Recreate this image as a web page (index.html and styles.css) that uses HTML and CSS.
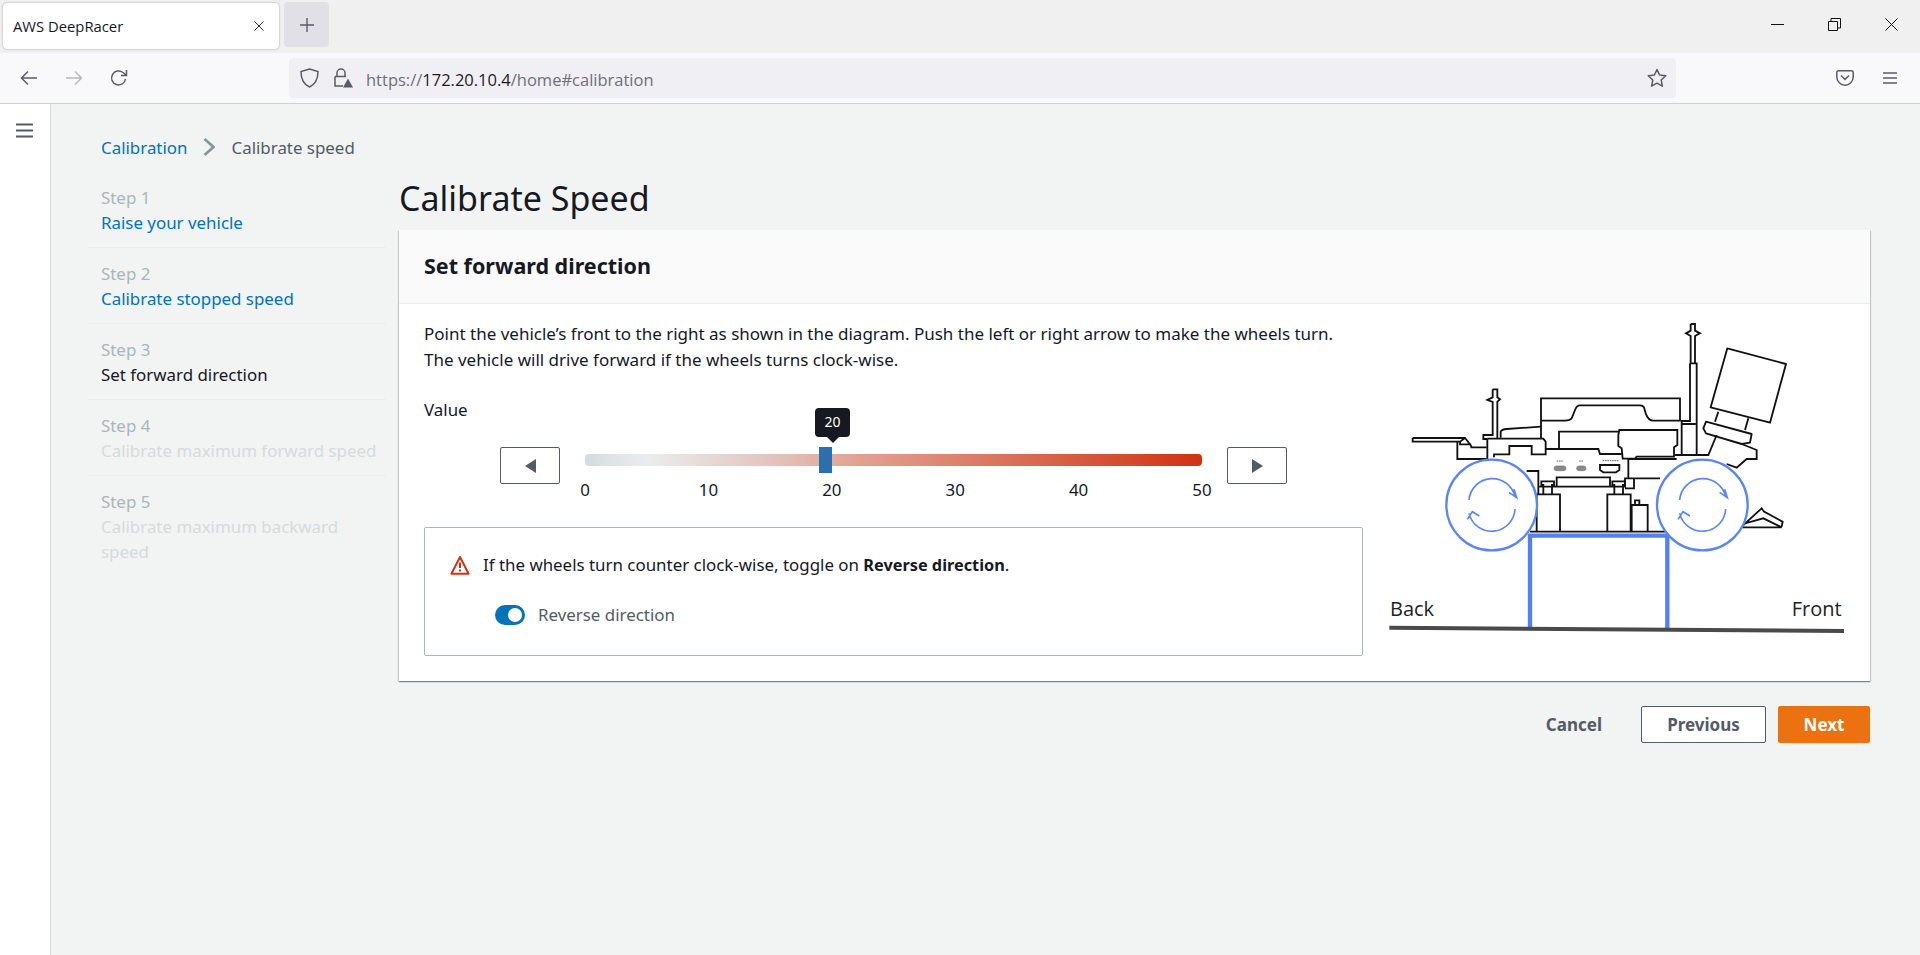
FILE: index.html
```html
<!DOCTYPE html>
<html lang="en">
<head>
    <meta charset="UTF-8">
    <meta name="viewport" content="width=device-width, initial-scale=1.0">
    <title>AWS DeepRacer</title>
    <link rel="stylesheet" href="styles.css">
</head>
<body>

    <!-- browser chrome -->
    <div class="tab-strip">
        <div class="tab">
            <span class="tab-title">AWS DeepRacer</span>
            <svg class="icon-sm" width="10" height="10" viewBox="0 0 10 10"><path d="M0.5 0.5L9.5 9.5M9.5 0.5L0.5 9.5" stroke="#2b2a33" fill="none"/></svg>
        </div>
        <div class="new-tab">
            <svg width="16" height="16" viewBox="0 0 16 16"><path d="M8 1V15M1 8H15" stroke="#5b5b66" stroke-width="1.4" fill="none"/></svg>
        </div>
        <div class="window-controls">
            <svg width="13" height="13" viewBox="0 0 13 13"><path d="M0 6.5H13" stroke="#111" fill="none"/></svg>
            <svg width="13" height="13" viewBox="0 0 13 13"><path d="M0.5 3.5H9.5V12.5H0.5ZM3 3.5V0.5H12.5V10H9.5" stroke="#111" fill="none"/></svg>
            <svg width="13" height="13" viewBox="0 0 13 13"><path d="M0.5 0.5L12.5 12.5M12.5 0.5L0.5 12.5" stroke="#111" fill="none"/></svg>
        </div>
    </div>

    <div class="toolbar">
        <div class="nav-buttons">
            <svg width="18" height="16" viewBox="0 0 18 16"><path d="M17 8H2M8 1.5L1.5 8L8 14.5" stroke="#5b5b66" stroke-width="1.5" fill="none"/></svg>
            <svg width="18" height="16" viewBox="0 0 18 16"><path d="M1 8H16M10 1.5L16.5 8L10 14.5" stroke="#b8b8bd" stroke-width="1.5" fill="none"/></svg>
            <svg width="18" height="18" viewBox="0 0 18 18"><path d="M15.5 10A7 7 0 1 1 13 3.5L16 6M16.5 1V6.5H11" stroke="#5b5b66" stroke-width="1.5" fill="none"/></svg>
        </div>
        <div class="url-bar">
            <svg width="19" height="20" viewBox="0 0 19 20"><path d="M9.5 1L18 3.5C18 11 16 16 9.5 19C3 16 1 11 1 3.5Z" stroke="#5b5b66" stroke-width="1.5" fill="none"/></svg>
            <svg width="20" height="20" viewBox="0 0 20 20"><path d="M4 8V5A4 4 0 0 1 12 5V8M2 8.5H13M2 8.5V18H10" stroke="#5b5b66" stroke-width="1.5" fill="none"/><path d="M15 10.5L20 19.5H10Z" fill="#5b5b66"/></svg>
            <span class="url"><span class="url-muted">https://</span>172.20.10.4<span class="url-muted">/home#calibration</span></span>
            <svg class="star" width="20" height="20" viewBox="0 0 20 20"><path d="M10 1.5L12.6 7L18.8 7.8L14.2 12L15.4 18.2L10 15.2L4.6 18.2L5.8 12L1.2 7.8L7.4 7Z" stroke="#5b5b66" stroke-width="1.5" stroke-linejoin="round" fill="none"/></svg>
        </div>
        <div class="toolbar-right">
            <svg width="18" height="16" viewBox="0 0 18 16"><path d="M2.5 0.8H15.5A1.7 1.7 0 0 1 17.2 2.5V7A8.2 8.2 0 0 1 0.8 7V2.5A1.7 1.7 0 0 1 2.5 0.8ZM5 5.5L9 9.5L13 5.5" stroke="#5b5b66" stroke-width="1.5" fill="none"/></svg>
            <svg width="14" height="12" viewBox="0 0 14 12"><path d="M0 1H14M0 6H14M0 11H14" stroke="#5b5b66" stroke-width="1.4" fill="none"/></svg>
        </div>
    </div>

    <div class="app">
        <div class="side-rail">
            <svg width="17" height="15" viewBox="0 0 17 15"><path d="M0 1.5H17M0 7.5H17M0 13.5H17" stroke="#545b64" stroke-width="2.2" fill="none"/></svg>
        </div>

        <div class="content">
            <div class="breadcrumb">
                <a class="link">Calibration</a>
                <svg width="12" height="18" viewBox="0 0 12 18"><path d="M1.5 1L10.5 9L1.5 17" stroke="#879596" stroke-width="2.6" fill="none"/></svg>
                <span>Calibrate speed</span>
            </div>

            <div class="layout">
                <ul class="steps">
                    <li><small>Step 1</small><a class="link">Raise your vehicle</a></li>
                    <li><small>Step 2</small><a class="link">Calibrate stopped speed</a></li>
                    <li><small>Step 3</small><span>Set forward direction</span></li>
                    <li class="disabled"><small>Step 4</small><span>Calibrate maximum forward speed</span></li>
                    <li class="disabled"><small>Step 5</small><span>Calibrate maximum backward speed</span></li>
                </ul>

                <div class="main">
                    <h1>Calibrate Speed</h1>

                    <div class="card">
                        <div class="card-header">Set forward direction</div>
                        <div class="card-body">
                            <div class="card-left">
                                <p class="intro">Point the vehicle’s front to the right as shown in the diagram. Push the left or right arrow to make the wheels turn.<br>The vehicle will drive forward if the wheels turns clock-wise.</p>
                                <div class="value-label">Value</div>

                                <div class="slider-row">
                                    <button class="arrow-btn"><span class="tri-left"></span></button>
                                    <div class="slider">
                                        <div class="track"></div>
                                        <div class="thumb"></div>
                                        <div class="bubble">20</div>
                                        <div class="ticks">
                                            <span><b>0</b></span>
                                            <span><b>10</b></span>
                                            <span><b>20</b></span>
                                            <span><b>30</b></span>
                                            <span><b>40</b></span>
                                            <span><b>50</b></span>
                                        </div>
                                    </div>
                                    <button class="arrow-btn"><span class="tri-right"></span></button>
                                </div>

                                <div class="notice">
                                    <div class="notice-line">
                                        <svg width="20" height="20" viewBox="0 0 20 20"><path d="M10 2L18.6 18.8H1.4Z" stroke="#d13212" stroke-width="2" stroke-linejoin="round" fill="none"/><path d="M10 7.5V13M10 14.5V16.5" stroke="#d13212" stroke-width="2" fill="none"/></svg>
                                        <span>If the wheels turn counter clock-wise, toggle on <strong>Reverse direction</strong>.</span>
                                    </div>
                                    <div class="toggle-line">
                                        <span class="toggle"><span class="knob"></span></span>
                                        <span>Reverse direction</span>
                                    </div>
                                </div>
                            </div>

                            <svg class="diagram" width="480" height="330" viewBox="0 0 1440 990">
                                <g class="car">
                                    <path d="M98 384H255L274 408M98 384V395H240L255 384M232 395V447H320"/>
                                    <path d="M240 395V403H272M274 408V412H320"/>
                                    <path d="M338 238H352V262L360 268L352 275V385M338 238V262L322 270L338 276V375H310V387H322"/>
                                    <path d="M322 387V447M322 386H490L497 395V433H455V408H388V433H342V442"/>
                                    <path d="M362 383V365Q365 358 380 357L482 350"/>
                                    <path d="M483 386V265H900V332H820Q805 332 797 310L792 292Q788 286 780 286H600Q590 286 585 300L575 325Q570 332 555 332H483"/>
                                    <path d="M537 417V365H716"/>
                                    <path d="M497 417H655L660 432H725"/>
                                    <path d="M718 360H892V405L882 412V440H770L765 446H728L725 415L715 408V375Z"/>
                                    <path d="M440 483H475V553M478 530H735V505H745V445M530 528V502H690V528M745 505H762V535H735"/>
                                    <path d="M745 447H890M765 505H840"/>
                                    <path d="M470 553H540V665M470 553V665M682 665V553H752V665M755 665V585H803V665M765 585V571H778V585"/>
                                    <path d="M490 553V525H484V514H522V525H516V553M703 553V525H697V514H735V525H729V553"/>
                                    <path d="M450 665H860"/>
                                    <path d="M932 42H945V62L960 70L945 78V160M932 42V62L918 70L932 78V160M932 160H950V432M930 160V333H905V435H985M905 342H947"/>
                                    <path d="M1042 115L1218 162L1170 338L992 292Z" stroke-linejoin="round"/>
                                    <path d="M1015 305L1005 335M1105 325L1095 360"/>
                                    <path d="M978 335L1115 372L1110 398L1085 402L978 370L970 355Z" stroke-linejoin="round"/>
                                    <path d="M1085 402L1130 420V447H1100L1070 473L1040 462M1010 375L985 435H885"/>
                                    <path d="M1085 650L1145 595L1152 605L1208 635L1205 650M1085 652H1205L1150 625L1125 632L1095 640"/>
                                    <rect class="port" x="522" y="468" width="36" height="14" rx="7"/>
                                    <rect class="port" x="590" y="468" width="28" height="14" rx="7"/>
                                    <path d="M660 465H718V480L708 487H670L660 480Z"/>
                                    <path class="port-mark" d="M530 453H548M597 453H610M668 452H716"/>
                                </g>
                                <path class="stand" d="M450 960V677H862V960"/>
                                <path class="ground" d="M28 953L1392 963"/>
                                <g class="wheel">
                                    <circle cx="335" cy="585" r="136"/>
                                    <path d="M267 570A70 70 0 0 1 405 560M387 547L410 563L402 538M405 597A70 70 0 0 1 267 610M262 628L277 605L298 618"/>
                                    <circle cx="967" cy="585" r="136"/>
                                    <path d="M899 570A70 70 0 0 1 1037 560M1019 547L1042 563L1034 538M1037 597A70 70 0 0 1 899 610M894 628L909 605L930 618"/>
                                </g>
                                <text class="diagram-label" x="30" y="919">Back</text>
                                <text class="diagram-label" x="1235" y="919">Front</text>
                            </svg>
                        </div>
                    </div>

                    <div class="actions">
                        <button class="btn-link">Cancel</button>
                        <button class="btn">Previous</button>
                        <button class="btn btn-primary">Next</button>
                    </div>
                </div>
            </div>
        </div>
    </div>

</body>
</html>
```

FILE: styles.css
```css
* {
    box-sizing: border-box;
}
body {
    margin: 0;
    height: 955px;
    overflow: hidden;
    font-family: "Noto Sans", Arial, sans-serif;
    font-size: 16.9px;
    color: #16191f;
    background-color: #f2f3f3;
}

/* browser chrome */
.tab-strip {
    display: flex;
    height: 53px;
    padding: 2px 0 0 3px;
    background-color: #f0f0f0;
}
.tab {
    display: flex;
    align-items: center;
    justify-content: space-between;
    width: 276px;
    height: 46px;
    margin-top: 1px;
    padding: 0 15px 0 10px;
    background: white;
    border-radius: 4px;
    box-shadow: 0 0 2px rgba(0, 0, 0, 0.4);
    font-family: "Open Sans", sans-serif;
    font-size: 14.8px;
}
.new-tab {
    display: flex;
    align-items: center;
    justify-content: center;
    width: 45px;
    height: 45px;
    margin-left: 5px;
    background-color: #e0e0e6;
    border-radius: 4px;
}
.window-controls {
    display: flex;
    align-items: center;
    gap: 44px;
    height: 45px;
    margin-left: auto;
    padding-right: 22px;
}
.toolbar {
    display: flex;
    align-items: center;
    height: 51px;
    background-color: #f9f9fb;
    border-bottom: 1px solid #cfcfd8;
}
.nav-buttons {
    display: flex;
    align-items: center;
    gap: 27px;
    width: 289px;
    padding-left: 20px;
}
.url-bar {
    display: flex;
    align-items: center;
    gap: 14px;
    width: 1387px;
    height: 40px;
    padding: 0 9px 0 11px;
    background-color: #f0f0f4;
    border-radius: 4px;
}
.url {
    margin-left: -1px;
    padding-top: 2px;
    font-family: "Open Sans", sans-serif;
    font-size: 16.5px;
    color: #1c1b22;
}
.url-muted {
    color: #6f6f78;
}
.star {
    margin-left: auto;
}
.toolbar-right {
    display: flex;
    align-items: center;
    gap: 29px;
    margin-left: 160px;
}

/* page */
.app {
    display: flex;
    height: 851px;
}
.side-rail {
    width: 51px;
    padding: 16px 0 0 16px;
    background: white;
    border-right: 1px solid #d5dbdb;
}
.content {
    flex: 1;
    padding: 28px 50px 0 37px;
}
.link {
    color: #0073bb;
}
.breadcrumb {
    display: flex;
    align-items: center;
    gap: 16px;
    height: 30px;
    padding-left: 13px;
    color: #545b64;
}
.layout {
    display: flex;
    gap: 13px;
    margin-top: 10px;
}
.steps {
    width: 298px;
    margin: 0;
    padding: 0;
    list-style: none;
}
.steps li {
    padding: 13px 0 12px 13px;
    line-height: 25px;
    border-bottom: 1px solid #eaeded;
}
.steps li:last-child {
    border-bottom: none;
}
.steps small, .steps a, .steps span {
    display: block;
    font-size: 16.9px;
}
.steps small {
    color: #aab7b8;
}
.steps .disabled span {
    color: #d5dbdb;
}
.main {
    flex: 1;
}
h1 {
    margin: 0 0 6px;
    font-size: 34px;
    font-weight: 400;
    line-height: 52px;
}
.card {
    background: white;
    box-shadow: 0 1px 1px 0 rgba(0, 28, 36, 0.3), 1px 1px 1px 0 rgba(0, 28, 36, 0.15), -1px 1px 1px 0 rgba(0, 28, 36, 0.15);
}
.card-header {
    height: 74px;
    padding-left: 25px;
    background-color: #fafafa;
    border-bottom: 1px solid #eaeded;
    font-size: 21.5px;
    font-weight: 700;
    line-height: 71px;
}
.card-body {
    display: flex;
    gap: 17px;
    padding: 6px 10px 0 25px;
}
.card-left {
    width: 939px;
    padding: 11px 0 25px;
}
.intro {
    margin: 0;
    font-size: 17px;
    line-height: 26px;
}
.value-label {
    margin-top: 25px;
    line-height: 24px;
}
.slider-row {
    display: flex;
    gap: 25px;
    margin-top: 25px;
    padding-left: 76px;
}
.arrow-btn {
    display: flex;
    align-items: center;
    justify-content: center;
    width: 60px;
    height: 37px;
    padding: 0;
    background: white;
    border: 1px solid #545b64;
    border-radius: 2px;
}
.tri-left, .tri-right {
    width: 0;
    height: 0;
    border-top: 7px solid transparent;
    border-bottom: 7px solid transparent;
}
.tri-left {
    border-right: 11px solid #545b64;
}
.tri-right {
    border-left: 11px solid #545b64;
}
.slider {
    position: relative;
    width: 617px;
    padding-top: 7px;
}
.track {
    height: 12px;
    background: linear-gradient(to right, #d5dbdb 0%, #eaeded 10%, #e3c4bd 30%, #e0a090 45%, #d13212 100%);
    border-radius: 4px;
}
.thumb {
    position: absolute;
    top: 0;
    left: 234px;
    width: 13px;
    height: 26px;
    background-color: #2b6fad;
}
.bubble {
    position: absolute;
    top: -39px;
    left: 230px;
    width: 35px;
    height: 29px;
    background-color: #16191f;
    border-radius: 4px;
    color: white;
    font-size: 14px;
    line-height: 28px;
    text-align: center;
}
.bubble::after {
    content: "";
    position: absolute;
    top: 29px;
    left: 12px;
    border-top: 6px solid #16191f;
    border-left: 6px solid transparent;
    border-right: 6px solid transparent;
}
.ticks {
    display: flex;
    justify-content: space-between;
    margin-top: 12px;
    line-height: 24px;
}
.ticks span {
    display: flex;
    justify-content: center;
    width: 0;
}
.ticks b {
    font-weight: 400;
}
.notice {
    height: 129px;
    margin-top: 25px;
    padding: 25px 0 0 25px;
    border: 1px solid #aab7b8;
    border-radius: 2px;
}
.notice-line {
    display: flex;
    align-items: center;
    gap: 13px;
    line-height: 24px;
}
.notice-line strong {
    font-size: 16.3px;
}
.toggle-line {
    display: flex;
    align-items: center;
    gap: 13px;
    margin-top: 26px;
    padding-left: 45px;
    color: #545b64;
    line-height: 24px;
}
.toggle {
    display: flex;
    align-items: center;
    justify-content: flex-end;
    width: 30px;
    height: 20px;
    padding-right: 3px;
    background-color: #0073bb;
    border-radius: 10px;
}
.knob {
    width: 14px;
    height: 14px;
    background: white;
    border-radius: 50%;
}
.diagram {
    flex: none;
}
.car path, .car rect {
    fill: none;
    stroke: #111;
    stroke-width: 5.5;
}
.car .port {
    fill: #888;
    stroke: #777;
    stroke-width: 2;
}
.car .port-mark {
    stroke: #666;
    stroke-width: 3;
    stroke-dasharray: 5 2;
}
.stand {
    fill: none;
    stroke: #5480f5;
    stroke-width: 13;
}
.ground {
    fill: none;
    stroke: #4a4a4a;
    stroke-width: 12;
}
.wheel circle {
    fill: white;
    stroke: #5a86f5;
    stroke-width: 7;
}
.wheel path {
    fill: none;
    stroke: #5a86f5;
    stroke-width: 5;
}
.diagram-label {
    font-family: "Open Sans", sans-serif;
    font-size: 60px;
    fill: #222;
}
.actions {
    display: flex;
    justify-content: flex-end;
    gap: 12px;
    margin-top: 25px;
}
.btn, .btn-link {
    height: 37px;
    padding: 0;
    background: none;
    border: none;
    font-family: inherit;
    font-size: 17px;
    font-weight: 700;
    color: #545b64;
}
.btn-link {
    margin-right: 27px;
}
.btn {
    width: 125px;
    background: white;
    border: 1px solid #545b64;
    border-radius: 2px;
}
.btn-primary {
    width: 92px;
    background-color: #ec7211;
    border-color: #ec7211;
    color: white;
}
```
